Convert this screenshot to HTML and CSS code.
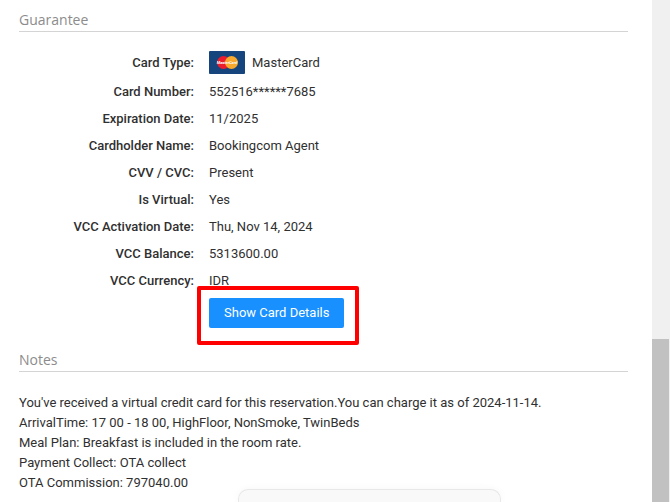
FILE: index.html
```html
<!DOCTYPE html>
<html lang="en">
<head>
  <meta charset="utf-8">
  <title>Reservation Guarantee</title>
  <link rel="stylesheet" href="styles.css">
</head>
<body>
  <main class="content">
    <section>
      <h2>Guarantee</h2>
      <dl class="details">
        <dt class="card-row">Card Type:</dt>
        <dd class="card-row">
          <svg class="card-logo" viewBox="0 0 36 23" aria-hidden="true">
            <rect width="36" height="23" rx="1" fill="#15457c"/>
            <circle cx="14.5" cy="11.5" r="6.5" fill="#eb1c2d"/>
            <circle cx="22.5" cy="11.5" r="6.5" fill="#f9a92b"/>
            <text x="18" y="13" text-anchor="middle" class="card-logo-text">MasterCard</text>
          </svg>
          MasterCard
        </dd>
        <dt>Card Number:</dt>
        <dd>552516******7685</dd>
        <dt>Expiration Date:</dt>
        <dd>11/2025</dd>
        <dt>Cardholder Name:</dt>
        <dd>Bookingcom Agent</dd>
        <dt>CVV / CVC:</dt>
        <dd>Present</dd>
        <dt>Is Virtual:</dt>
        <dd>Yes</dd>
        <dt>VCC Activation Date:</dt>
        <dd>Thu, Nov 14, 2024</dd>
        <dt>VCC Balance:</dt>
        <dd>5313600.00</dd>
        <dt>VCC Currency:</dt>
        <dd>IDR</dd>
      </dl>
      <div class="actions">
        <div class="highlight">
          <button type="button">Show Card Details</button>
        </div>
      </div>
    </section>

    <section>
      <h2>Notes</h2>
      <div class="notes">
        <p>You've received a virtual credit card for this reservation.You can charge it as of 2024-11-14.</p>
        <p>ArrivalTime: 17 00 - 18 00, HighFloor, NonSmoke, TwinBeds</p>
        <p>Meal Plan: Breakfast is included in the room rate.</p>
        <p>Payment Collect: OTA collect</p>
        <p>OTA Commission: 797040.00</p>
      </div>
    </section>
  </main>

  <div class="scrollbar">
    <div class="thumb"></div>
  </div>

  <div class="popup"></div>
</body>
</html>
```

FILE: styles.css
```css
* {
  box-sizing: border-box;
}

body {
  display: flex;
  height: 100vh;
  margin: 0;
  overflow: hidden;
  background-color: #fff;
  color: #303030;
  font-family: "Segoe UI", Roboto, "Noto Sans", sans-serif;
  font-size: 13px;
  line-height: 20px;
}

.content {
  flex: 1;
  padding: 9px 24px 0 19px;
}

h2 {
  margin: 0;
  border-bottom: 1px solid #d4d4d4;
  color: #8c8c8c;
  font-family: "Segoe UI", "Open Sans", "Noto Sans", sans-serif;
  font-size: 14px;
  font-weight: 400;
  line-height: 22px;
}

/* card details */
.details {
  display: grid;
  grid-template-columns: 175px 1fr;
  column-gap: 15px;
  margin: 0;
  padding-top: 14px;
}

dt,
dd {
  margin: 0;
  line-height: 27px;
}

dt {
  font-weight: 500;
  text-align: right;
}

.card-row {
  display: flex;
  align-items: center;
  height: 32px;
}

dt.card-row {
  justify-content: flex-end;
}

.card-logo {
  width: 36px;
  height: 23px;
  margin-right: 7px;
}

.card-logo-text {
  fill: #fff;
  font-size: 4px;
  font-style: italic;
  font-weight: 700;
}

.actions {
  padding: 4px 0 21px 190px;
}

.highlight {
  position: relative;
  display: inline-block;
  vertical-align: top;
}

.highlight::after {
  content: "";
  position: absolute;
  inset: -12px -15px -17px -12px;
  border: 4px solid #fe0000;
  border-radius: 2px;
  pointer-events: none;
}

button {
  display: block;
  height: 30px;
  padding: 0 15px;
  border: none;
  border-radius: 2px;
  background-color: #1890ff;
  color: #fff;
  font: inherit;
  cursor: pointer;
}

.notes {
  padding-top: 21px;
}

.notes p {
  margin: 0;
}

/* scrollbar */
.scrollbar {
  display: flex;
  flex-direction: column;
  justify-content: flex-end;
  width: 18px;
  padding-right: 1px;
  background-color: #f0f0f0;
}

.thumb {
  height: 163px;
  background-color: #c1c1c1;
}

/* popup coming in over the bottom edge */
.popup {
  position: absolute;
  bottom: 0;
  left: 238px;
  width: 263px;
  height: 13px;
  border: 1px solid #e8e8e8;
  border-bottom: none;
  border-radius: 10px 10px 0 0;
  background-color: #f9f9f9;
  box-shadow: 0 0 8px rgba(0, 0, 0, 0.04);
}
```
